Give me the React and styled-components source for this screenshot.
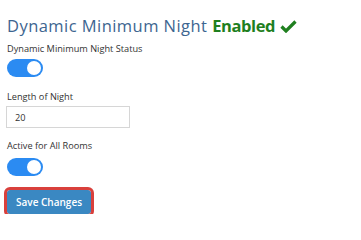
import React, { useState } from 'react';
import styled, { createGlobalStyle } from 'styled-components';

const GlobalStyle = createGlobalStyle`
  body {
    margin: 0;
    background: #ffffff;
    font-family: "Open Sans", "Noto Sans", sans-serif;
  }
`;

const Panel = styled.div`
  display: flex;
  flex-direction: column;
  align-items: flex-start;
  padding: 16px 0 0 7px;
`;

const Title = styled.h2`
  margin: 0 0 7px;
  font-size: 16.5px;
  line-height: 20px;
  font-weight: 400;
  letter-spacing: 0.45px;
  color: #3d6590;
  display: flex;
  align-items: center;
  white-space: pre;
`;

const Status = styled.span`
  color: #1f7f1f;
  font-weight: 700;
  letter-spacing: -0.4px;
  margin-right: 5px;
`;

const Label = styled.label`
  font-size: 9.2px;
  line-height: 12px;
  color: #333;
  margin-bottom: ${(p) => p.$gap ?? 4}px;
`;

const Track = styled.button`
  width: 36px;
  height: 18px;
  padding: 0;
  border: none;
  border-radius: 9px;
  background: ${(p) => (p.$on ? '#2b8bf2' : '#c8ccd2')};
  position: relative;
  cursor: pointer;
  margin-bottom: ${(p) => p.$gap ?? 14}px;
`;

const Knob = styled.span`
  position: absolute;
  top: 2px;
  left: ${(p) => (p.$on ? '20px' : '2px')};
  width: 14px;
  height: 14px;
  border-radius: 50%;
  background: #fff;
`;

const Input = styled.input`
  box-sizing: border-box;
  width: 124px;
  height: 22px;
  margin: 0 0 12px -1px;
  border: 1px solid #d6d6d6;
  padding: 0 8px;
  font-family: inherit;
  font-size: 9.2px;
  color: #333;
  outline: none;
`;

const SaveButton = styled.button`
  margin: 0;
  height: 24px;
  padding: 0 9px;
  border: none;
  border-radius: 3px;
  background: #3a88c2;
  color: #fff;
  font-family: inherit;
  font-size: 10px;
  font-weight: 600;
  outline: 3px solid #d9403c;
  outline-offset: 0;
  cursor: pointer;
`;

function Toggle({ on, onChange, gap }) {
  return (
    <Track $on={on} $gap={gap} onClick={() => onChange(!on)}>
      <Knob $on={on} />
    </Track>
  );
}

export default function App() {
  const [status, setStatus] = useState(true);
  const [allRooms, setAllRooms] = useState(true);
  const [nights, setNights] = useState('20');

  return (
    <>
      <GlobalStyle />
      <Panel>
        <Title>
          {'Dynamic Minimum Night '}
          <Status>Enabled</Status>
          <svg width="17" height="13" viewBox="0 0 17 13">
            <path d="M1.5 6.5 L6 11 L15.5 1.5" fill="none" stroke="#1f7f1f" strokeWidth="3.2" />
          </svg>
        </Title>
        <Label>Dynamic Minimum Night Status</Label>
        <Toggle on={status} onChange={setStatus} gap={14} />
        <Label $gap={3}>Length of Night</Label>
        <Input value={nights} onChange={(e) => setNights(e.target.value)} />
        <Label $gap={6}>Active for All Rooms</Label>
        <Toggle on={allRooms} onChange={setAllRooms} gap={14} />
        <SaveButton>Save Changes</SaveButton>
      </Panel>
    </>
  );
}
